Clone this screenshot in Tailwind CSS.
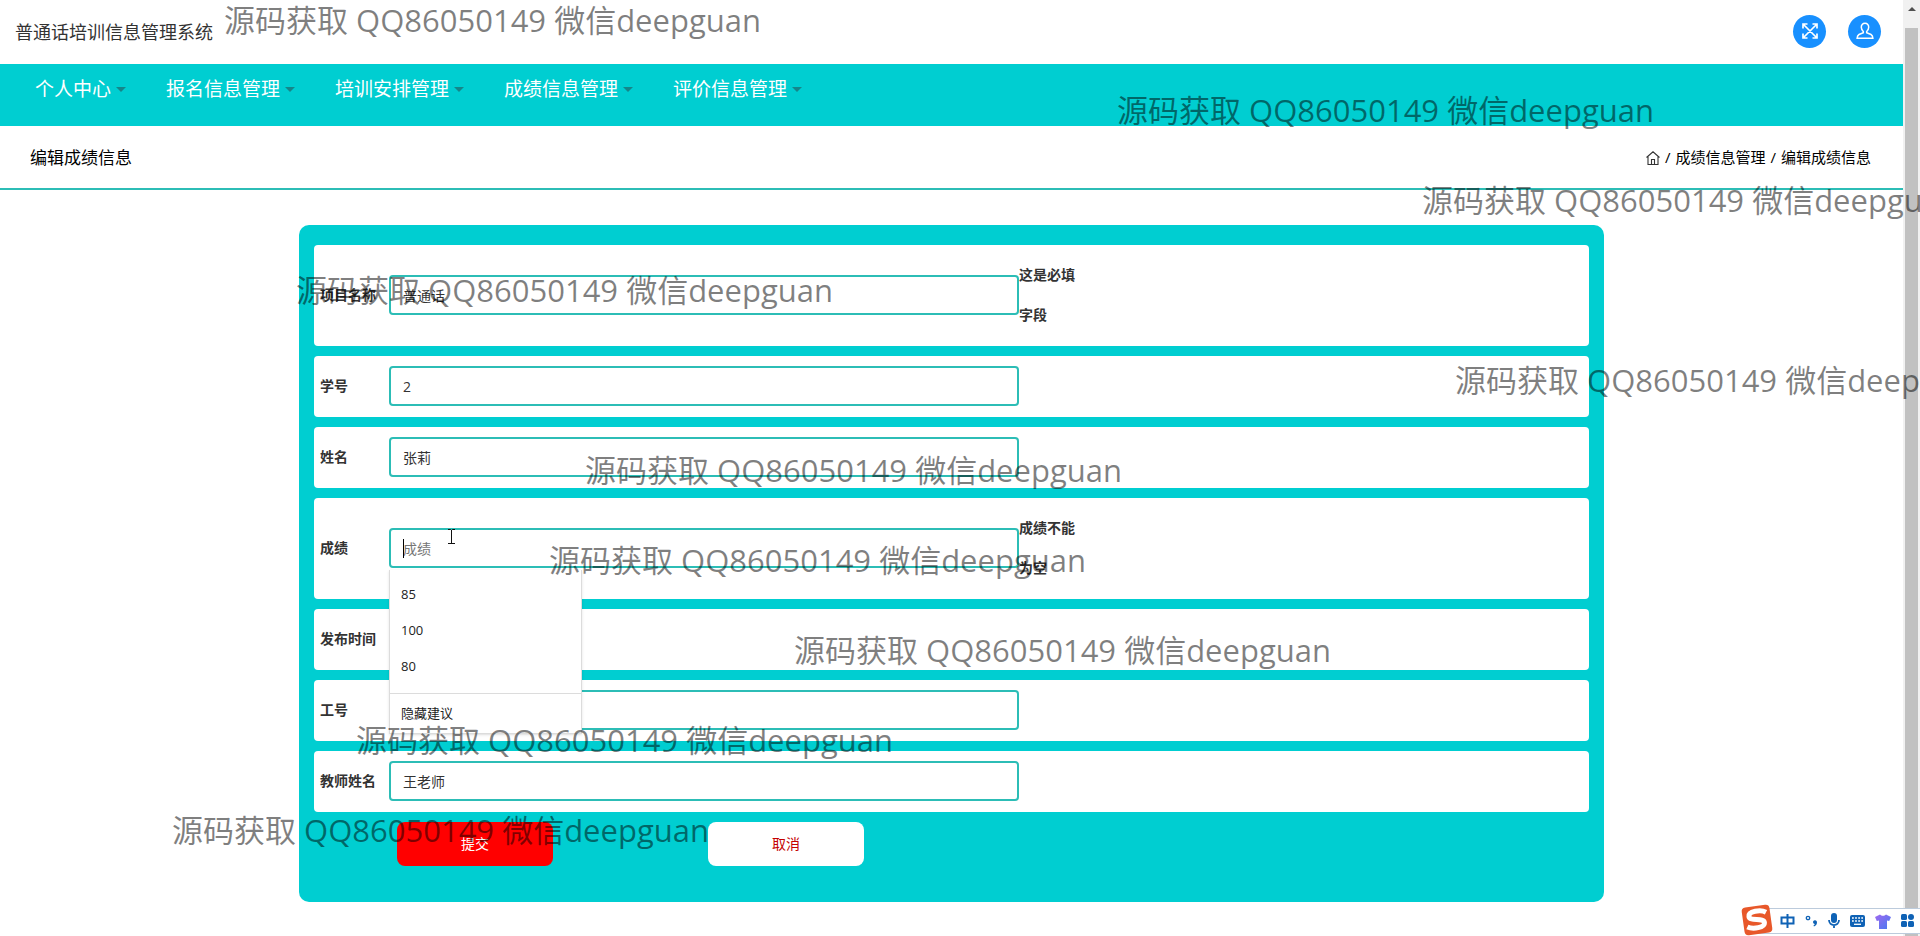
<!DOCTYPE html>
<html lang="zh-CN">
<head>
<meta charset="utf-8">
<title>普通话培训信息管理系统</title>
<script src="https://cdn.jsdelivr.net/npm/@tailwindcss/browser@4"></script>
</head>
<body class="relative flex min-h-screen overflow-hidden bg-white font-['Open_Sans','Noto_Sans_CJK_SC',sans-serif] text-sm text-[#333]">

<div class="flex min-w-0 flex-1 flex-col">
  <header class="flex h-16 items-center justify-between pl-[15px] pr-[22px]">
    <h1 class="text-lg text-[#333]">普通话培训信息管理系统</h1>
    <div class="flex gap-[22px] pb-0.5">
      <button type="button" aria-label="全屏" class="flex size-[33px] items-center justify-center rounded-full bg-[#1890ff]">
        <svg class="size-[16px]" viewBox="0 0 16 16" fill="none" stroke="#fff" stroke-width="1.7"><path d="M1 5.5V1h4.500M10.500 1H15v4.500M15 10.500V15h-4.500M5.500 15H1v-4.500M1.500 1.500l13 13M14.500 1.500l-13 13"/></svg>
      </button>
      <button type="button" aria-label="用户" class="flex size-[33px] items-center justify-center rounded-full bg-[#1890ff]">
        <svg class="size-[18px]" viewBox="0 0 18 18" fill="none" stroke="#fff" stroke-width="1.5"><path d="M9 1.300c-2.400 0-3.800 1.700-3.700 3.900.1 2 .8 3.300 2 4.300v1.300L3 12.500c-1.300.7-1.800 1.800-1.900 3.700h15.800c-.1-1.900-.6-3-1.900-3.700l-4.300-1.700V9.500c1.200-1 1.900-2.300 2-4.300.1-2.200-1.300-3.900-3.700-3.900z"/></svg>
      </button>
    </div>
  </header>

  <nav class="flex h-[62px] items-start gap-10 bg-[#00ced1] px-[35px] pt-[9px] text-[19px] leading-8 text-white">
    <a href="#" class="flex items-center gap-[5px]">个人中心<span class="border-x-5 border-t-5 border-x-transparent border-t-[#15868a]"></span></a>
    <a href="#" class="flex items-center gap-[5px]">报名信息管理<span class="border-x-5 border-t-5 border-x-transparent border-t-[#15868a]"></span></a>
    <a href="#" class="flex items-center gap-[5px]">培训安排管理<span class="border-x-5 border-t-5 border-x-transparent border-t-[#15868a]"></span></a>
    <a href="#" class="flex items-center gap-[5px]">成绩信息管理<span class="border-x-5 border-t-5 border-x-transparent border-t-[#15868a]"></span></a>
    <a href="#" class="flex items-center gap-[5px]">评价信息管理<span class="border-x-5 border-t-5 border-x-transparent border-t-[#15868a]"></span></a>
  </nav>

  <div class="flex h-16 items-center justify-between border-b-2 border-[#2cbdb6] pl-[30px] pr-8 pt-0.5 text-black">
    <h2 class="text-[17px]">编辑成绩信息</h2>
    <div class="flex items-center gap-[5px] text-[15px]">
      <a href="#" aria-label="首页"><svg class="size-[14px]" viewBox="0 0 14 14" fill="none" stroke="#333" stroke-width="1.1"><path d="M.5 6.500L7 .8l6.500 5.700M2 5.500v8h10v-8M5.500 13.500V8.500h3v5"/></svg></a>
      <span>/</span><a href="#">成绩信息管理</a><span>/</span><span>编辑成绩信息</span>
    </div>
  </div>

  <main class="mt-[35px] px-8">
    <form class="mx-auto flex w-full max-w-[1305px] flex-col gap-2.5 rounded-[10px] bg-[#00ced1] px-[15px] pb-9 pt-5">
      <div class="flex items-center rounded bg-white pb-[11px] pl-1.5 pt-2.5">
        <label for="project" class="w-[69px] shrink-0 font-bold">项目名称</label>
        <input id="project" value="普通话" class="h-10 w-[630px] rounded border-2 border-[#2cbdb6] px-3">
        <span class="w-14 font-bold leading-10">这是必填字段</span>
      </div>
      <div class="flex items-center rounded bg-white pb-[11px] pl-1.5 pt-2.5">
        <label for="number" class="w-[69px] shrink-0 font-bold">学号</label>
        <input id="number" value="2" class="h-10 w-[630px] rounded border-2 border-[#2cbdb6] px-3">
      </div>
      <div class="flex items-center rounded bg-white pb-[11px] pl-1.5 pt-2.5">
        <label for="name" class="w-[69px] shrink-0 font-bold">姓名</label>
        <input id="name" value="张莉" class="h-10 w-[630px] rounded border-2 border-[#2cbdb6] px-3">
      </div>
      <div class="flex items-center rounded bg-white pb-[11px] pl-1.5 pt-2.5">
        <label for="score" class="w-[69px] shrink-0 font-bold">成绩</label>
        <div class="relative w-[630px]">
          <input id="score" placeholder="成绩" class="block h-10 w-full rounded border-2 border-[#2cbdb6] px-3 placeholder:text-[#757575]">
          <span class="absolute left-3.5 top-[11px] h-[19px] w-px bg-black"></span>
          <svg class="absolute left-[58px] top-0 h-[17px] w-[9px]" viewBox="0 0 9 17" fill="none" stroke="#111"><path d="M1 1.500h2.500l1 1 1-1H8M4.500 2v13M1 15.500h7"/></svg>
          <div class="absolute left-0 top-[42px] z-10 w-[193px] border border-t-0 border-[#dcdcdc] bg-white pt-1.5 text-[13px] text-[#222] shadow-sm">
            <ul class="pb-[9px] leading-9">
              <li class="px-[11px]">85</li>
              <li class="px-[11px]">100</li>
              <li class="px-[11px]">80</li>
            </ul>
            <button type="button" class="block h-10 w-full border-t border-[#dcdcdc] px-[11px] text-left">隐藏建议</button>
          </div>
        </div>
        <span class="w-14 font-bold leading-10">成绩不能为空</span>
      </div>
      <div class="flex items-center rounded bg-white pb-[11px] pl-1.5 pt-2.5">
        <label for="date" class="w-[69px] shrink-0 font-bold">发布时间</label>
        <input id="date" class="h-10 w-[180px] rounded border-2 border-[#2cbdb6] px-3">
      </div>
      <div class="flex items-center rounded bg-white pb-[11px] pl-1.5 pt-2.5">
        <label for="job" class="w-[69px] shrink-0 font-bold">工号</label>
        <input id="job" class="h-10 w-[630px] rounded border-2 border-[#2cbdb6] px-3">
      </div>
      <div class="flex items-center rounded bg-white pb-[11px] pl-1.5 pt-2.5">
        <label for="teacher" class="w-[69px] shrink-0 font-bold">教师姓名</label>
        <input id="teacher" value="王老师" class="h-10 w-[630px] rounded border-2 border-[#2cbdb6] px-3">
      </div>
      <div class="flex gap-[155px] pl-[83px]">
        <button type="submit" class="h-11 w-[156px] rounded-lg bg-[#ff0000] text-white">提交</button>
        <button type="button" class="h-11 w-[156px] rounded-lg bg-white text-[#c40000]">取消</button>
      </div>
    </form>
  </main>
</div>

<aside aria-hidden="true" class="flex w-[17px] flex-col items-center bg-[#f1f1f1]">
  <span class="mt-[7px] border-x-4 border-b-4 border-x-transparent border-b-[#505050]"></span>
  <span class="mt-[17px] w-[13px] flex-1 bg-[#c1c1c1]"></span>
</aside>

<!-- Watermarks over the page -->
<div aria-hidden="true" class="pointer-events-none absolute inset-0 z-20 overflow-hidden whitespace-nowrap text-[31px] leading-10 text-black/50">
  <span class="absolute left-[224px] top-0">源码获取 QQ86050149 微信deepguan</span>
  <span class="absolute left-[1117px] top-[90px]">源码获取 QQ86050149 微信deepguan</span>
  <span class="absolute left-[1422px] top-[180px]">源码获取 QQ86050149 微信deepguan</span>
  <span class="absolute left-[296px] top-[270px]">源码获取 QQ86050149 微信deepguan</span>
  <span class="absolute left-[1455px] top-[360px]">源码获取 QQ86050149 微信deepguan</span>
  <span class="absolute left-[585px] top-[450px]">源码获取 QQ86050149 微信deepguan</span>
  <span class="absolute left-[549px] top-[540px]">源码获取 QQ86050149 微信deepguan</span>
  <span class="absolute left-[794px] top-[630px]">源码获取 QQ86050149 微信deepguan</span>
  <span class="absolute left-[356px] top-[720px]">源码获取 QQ86050149 微信deepguan</span>
  <span class="absolute left-[172px] top-[810px]">源码获取 QQ86050149 微信deepguan</span>
</div>

<!-- Input method toolbar -->
<div class="absolute bottom-[2px] right-0 z-30 flex h-[26px] w-[162px] items-center justify-between border-y border-[#bccbdc] bg-white pl-[22px] pr-1.5 text-[#0f62b5]">
  <svg class="absolute -left-[17px] -top-[5px] size-[32px]" viewBox="0 0 32 32"><g transform="rotate(-8 16 16)"><rect x="2" y="2" width="28" height="28" rx="4" fill="#e8582a"/><path d="M26 9.500C21 6 8.500 6 8.500 11.500 8.500 16.500 23.500 14.500 23 19.800 22.500 24.500 11 25 5.500 21.500" fill="none" stroke="#fff" stroke-width="5"/></g></svg>
  <svg class="h-[16px] w-[15px]" viewBox="0 0 15 16" fill="none" stroke="currentColor" stroke-width="2"><path d="M1.500 4.500h12v6h-12zM7.500 1v14"/></svg>
  <svg class="h-[16px] w-[13px]" viewBox="0 0 13 16"><circle cx="3" cy="5" r="1.700" fill="none" stroke="currentColor" stroke-width="1.300"/><path d="M9 7.500a2 2 0 0 1 3 1.700c0 2-1.200 3.600-3 4.300l-.6-.9c.8-.5 1.200-1 1.300-1.700A1.800 1.800 0 0 1 9 7.500z" fill="currentColor"/></svg>
  <svg class="h-[16px] w-[12px]" viewBox="0 0 12 16"><rect x="3" y="0" width="6" height="10" rx="3" fill="currentColor"/><path d="M1 7c0 6.700 10 6.700 10 0M6 12v3" fill="none" stroke="currentColor" stroke-width="1.800"/></svg>
  <svg class="h-[12px] w-[15px]" viewBox="0 0 15 12"><rect width="15" height="12" rx="2" fill="currentColor"/><path d="M2 3h11M2 6h11" stroke="#fff" stroke-width="1.600" stroke-dasharray="1.800 1.300"/><path d="M4 9.300h7" stroke="#fff" stroke-width="1.300"/></svg>
  <svg class="h-[15px] w-[16px]" viewBox="0 0 16 15"><defs><linearGradient id="shirt" x1="0" x2="1" y2="1"><stop stop-color="#a06af0"/><stop offset="1" stop-color="#4478f0"/></linearGradient></defs><path d="M5 .5c1.500 1.800 4.500 1.800 6 0l5 2.500-1.800 4-2.200-.6V15H4V6.400L1.800 7 0 3z" fill="url(#shirt)"/></svg>
  <svg class="h-[14px] w-[13px]" viewBox="0 0 13 14" fill="currentColor"><rect width="6" height="6" rx="1.500"/><rect x="7" width="6" height="6" rx="3"/><rect y="7" width="6" height="6" rx="1.500"/><rect x="7" y="7" width="6" height="6" rx="1.500"/></svg>
</div>
</body>
</html>
